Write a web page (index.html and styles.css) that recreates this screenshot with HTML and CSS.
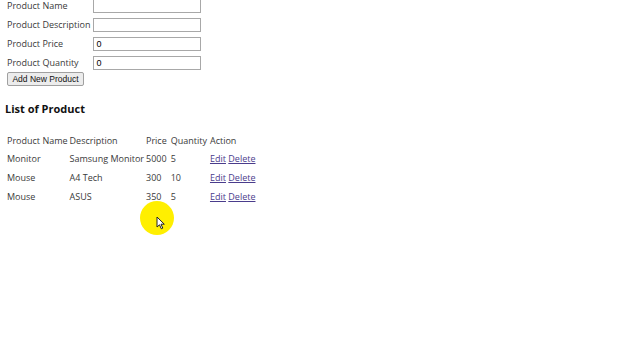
FILE: index.html
```html
<!DOCTYPE html>
<html>
<head>
<meta charset="utf-8">
<link rel="stylesheet" href="styles.css">
</head>
<body>
<div class="page">
  <table class="form">
    <tr><td class="lbl">Product Name</td><td><input class="inp" type="text"></td></tr>
    <tr><td class="lbl">Product Description</td><td><input class="inp" type="text"></td></tr>
    <tr><td class="lbl">Product Price</td><td><input class="inp" type="text" value="0"></td></tr>
    <tr><td class="lbl">Product Quantity</td><td><input class="inp" type="text" value="0"></td></tr>
  </table>
  <button class="btn">Add New Product</button>
  <h2 class="title">List of Product</h2>
  <table class="list">
    <tr class="head"><td>Product Name</td><td>Description</td><td>Price</td><td>Quantity</td><td>Action</td></tr>
    <tr><td>Monitor</td><td>Samsung Monitor</td><td>5000</td><td>5</td><td><a href="#">Edit</a> <a href="#">Delete</a></td></tr>
    <tr><td>Mouse</td><td>A4 Tech</td><td>300</td><td>10</td><td><a href="#">Edit</a> <a href="#">Delete</a></td></tr>
    <tr><td>Mouse</td><td>ASUS</td><td>350</td><td>5</td><td><a href="#">Edit</a> <a href="#">Delete</a></td></tr>
  </table>
</div>
<div class="cursor-spot">
  <svg class="cursor" width="10" height="14" viewBox="0 0 10 14"><path d="M1 1 L1 11 L3.5 8.8 L5.3 12.8 L6.8 12.1 L5 8.2 L8.3 8.2 Z" fill="#fff" stroke="#222" stroke-width="1"/></svg>
</div>
</body>
</html>
```
FILE: styles.css
```css
html, body { margin: 0; padding: 0; background: #fff; }
body { font-family: "Open Sans", "DejaVu Sans", sans-serif; font-size: 9px; color: #3a3a3a; }
.page { padding: 0 0 0 5px; margin-top: -4px; }
.form { border-collapse: collapse; }
.form td { padding: 0 2px; height: 19px; vertical-align: middle; }
.form .lbl { padding-right: 1px; white-space: nowrap; }
.inp { width: 102px; height: 10px; border: 1px solid #a8a8a8; padding: 1px 2px; font-family: "Liberation Sans", sans-serif; font-size: 9px; color: #000; margin: 0; display: block; }
.btn { margin: 0 0 0 2px; height: 14px; width: 77px; padding: 0; font-family: "Liberation Sans", sans-serif; font-size: 8.5px; color: #111; background: #ececec; border: 1px solid #a0a0a0; border-radius: 2px; display: block; }
.title { font-size: 11px; font-weight: bold; color: #111; margin: 15px 0 0 0; height: 18px; }
.list { border-collapse: collapse; margin-top: 12px; }
.list td { padding: 0 1px; height: 19px; white-space: nowrap; vertical-align: middle; }
.list .head td { height: 18px; }
.list td:first-child { padding-left: 2px; width: 60px; }
.list td:nth-child(3) { padding-right: 2px; }
.list td:nth-child(4) { padding-left: 2px; padding-right: 2px; }
.list a { color: #4a3c8c; }
.cursor-spot { position: absolute; left: 140px; top: 201px; width: 34px; height: 34px; border-radius: 50%; background: #ffef00; }
.cursor { position: absolute; left: 16px; top: 15px; }
```
